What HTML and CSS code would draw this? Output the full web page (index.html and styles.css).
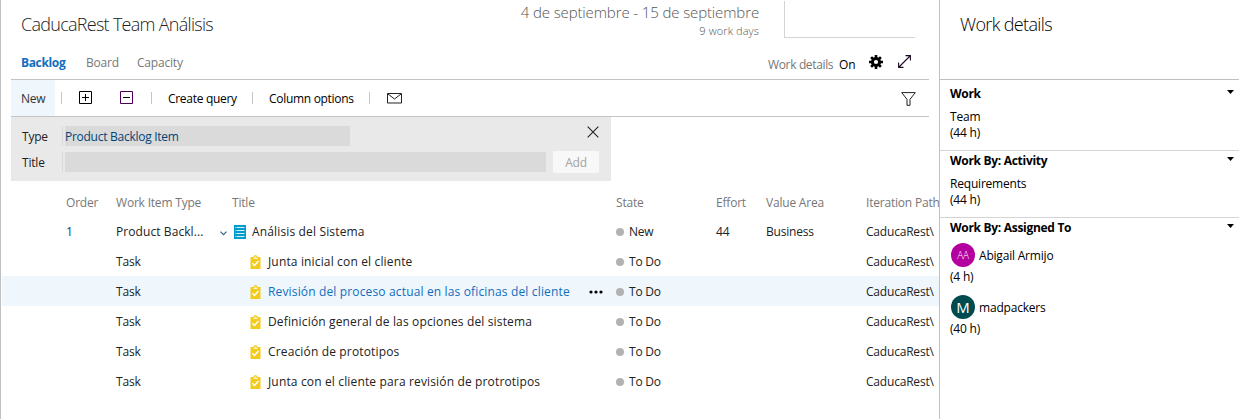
FILE: index.html
```html
<!DOCTYPE html>
<html lang="es">
<head>
<meta charset="utf-8">
<title>CaducaRest Team Análisis</title>
<link rel="stylesheet" href="styles.css">
</head>
<body>
<svg class="defs" width="0" height="0">
  <symbol id="task" viewBox="0 0 10 14">
    <path d="M0 2h3V1h1V0h2v1h1v1h3v12H0z" fill="#f2cb1d"/>
    <path d="M3 3.300h4M4.200 2h1.600" stroke="#fff" stroke-width="1"/>
    <path d="M2 8.200l2 2.200 4-4.400" fill="none" stroke="#fff" stroke-width="1.500"/>
  </symbol>
  <symbol id="caret" viewBox="0 0 7 4"><path d="M0 0h7L3.500 4z" fill="#000"/></symbol>
</svg>
<div class="app">
  <main class="main">
    <header class="head">
      <h1 class="title">CaducaRest Team Análisis</h1>
      <div class="sprint">
        <div class="dates">4 de septiembre - 15 de septiembre</div>
        <div class="days">9 work days</div>
      </div>
      <div class="chart"></div>
    </header>
    <nav class="tabs">
      <b class="tab-on">Backlog</b><span class="tab-board">Board</span><span>Capacity</span>
      <div class="tools">
        <span class="wd">Work details</span><span class="on">On</span>
        <svg class="gear" width="14" height="14" viewBox="-7 -7 14 14"><circle r="3.600" fill="none" stroke="#000" stroke-width="3"/><path d="M0-7V-4M0 7V4M-7 0H-4M7 0H4M-4.900-4.900L-3-3M4.900 4.900L3 3M-4.900 4.900L-3 3M4.900-4.900L3-3" stroke="#000" stroke-width="2.600"/></svg>
        <svg class="expand" width="13" height="13" viewBox="0 0 13 13" fill="none" stroke="#1a0a22" stroke-width="1.100"><path d="M1 12L12 1M7.500.6h4.900v4.900M.6 7.500v4.900h4.900"/></svg>
      </div>
    </nav>
    <div class="toolbar">
      <span class="new">New</span><i class="sep s1"></i>
      <svg class="plus" width="13" height="13" viewBox="0 0 13 13" fill="none" stroke="#000"><path d="M.5.5h12v12H.5zM3 6.500h7M6.500 3v7"/></svg>
      <svg class="minus" width="13" height="13" viewBox="0 0 13 13" fill="none"><path d="M.5.5h12v12H.5z" stroke="#4b0055"/><path d="M3 6.500h7" stroke="#000"/></svg>
      <i class="sep s2"></i><span class="cq">Create query</span><i class="sep s3"></i><span class="co">Column options</span><i class="sep s4"></i>
      <svg class="mail" width="15" height="11" viewBox="0 0 15 11" fill="none" stroke="#222"><path d="M.5.5h14v9.500H.5zM1 1l6.500 5L14 1"/></svg>
      <svg class="filter" width="15" height="14" viewBox="0 0 15 14" fill="none" stroke="#222"><path d="M.7.6h13.600L9 7.300v6H6v-6z"/></svg>
    </div>
    <section class="form">
      <div class="line"><label>Type</label><div class="input type"><span>Product Backlog Item</span></div>
        <svg class="close" width="12" height="12" viewBox="0 0 12 12" stroke="#222" stroke-width="1.100"><path d="M.7.7l10.600 10.600M11.300.7L.7 11.300"/></svg></div>
      <div class="line"><label>Title</label><div class="input name"><span></span></div><div class="add">Add</div></div>
    </section>
    <section class="grid">
      <div class="row hd"><span></span><span>Order</span><span>Work Item Type</span><span>Title</span><span></span><span>State</span><span>Effort</span><span>Value Area</span><span>Iteration Path</span></div>
      <div class="row"><span></span><span class="ord">1</span><span class="pb">Product Backl...</span>
        <span class="parent"><svg class="chev" width="7" height="5" viewBox="0 0 7 5" fill="none" stroke="#3c6285" stroke-width="1.200"><path d="M.5.7l3 3 3-3"/></svg><svg width="12" height="14" viewBox="0 0 12 14"><path d="M0 0h12v14H0z" fill="#009ccc"/><path d="M1.500 2.500h1M1.500 5.500h1M1.500 8.500h1M1.500 11.500h1M3 2.500h7.500M3 5.500h7.500M3 8.500h7.500M3 11.500h7.500" stroke="#fff" stroke-opacity=".85"/></svg><em>Análisis del Sistema</em></span>
        <span></span><span class="st"><i></i>New</span><span>44</span><span>Business</span><span>CaducaRest\</span></div>
      <div class="row"><span></span><span></span><span>Task</span><span class="child"><svg width="11" height="14"><use href="#task"/></svg><em>Junta inicial con el cliente</em></span><span></span><span class="st"><i></i>To Do</span><span></span><span></span><span>CaducaRest\</span></div>
      <div class="row sel"><span></span><span></span><span>Task</span><span class="child"><svg width="11" height="14"><use href="#task"/></svg><em>Revisión del proceso actual en las oficinas del cliente</em></span><span class="more"><svg width="14" height="4" viewBox="0 0 14 4"><circle cx="2" cy="2" r="1.600"/><circle cx="7" cy="2" r="1.600"/><circle cx="12" cy="2" r="1.600"/></svg></span><span class="st"><i></i>To Do</span><span></span><span></span><span>CaducaRest\</span></div>
      <div class="row"><span></span><span></span><span>Task</span><span class="child"><svg width="11" height="14"><use href="#task"/></svg><em>Definición general de las opciones del sistema</em></span><span></span><span class="st"><i></i>To Do</span><span></span><span></span><span>CaducaRest\</span></div>
      <div class="row"><span></span><span></span><span>Task</span><span class="child"><svg width="11" height="14"><use href="#task"/></svg><em>Creación de prototipos</em></span><span></span><span class="st"><i></i>To Do</span><span></span><span></span><span>CaducaRest\</span></div>
      <div class="row"><span></span><span></span><span>Task</span><span class="child"><svg width="11" height="14"><use href="#task"/></svg><em>Junta con el cliente para revisión de protrotipos</em></span><span></span><span class="st"><i></i>To Do</span><span></span><span></span><span>CaducaRest\</span></div>
    </section>
  </main>
  <aside class="side">
    <h2 class="side-title">Work details</h2>
    <section class="group work"><h3>Work<svg width="7" height="4"><use href="#caret"/></svg></h3><p>Team</p><p>(44 h)</p></section>
    <section class="group"><h3>Work By: Activity<svg width="7" height="4"><use href="#caret"/></svg></h3><p>Requirements</p><p>(44 h)</p></section>
    <section class="group last"><h3>Work By: Assigned To<svg width="7" height="4"><use href="#caret"/></svg></h3>
      <div class="person"><span class="av aa">AA</span><span class="who">Abigail Armijo</span></div><p>(4 h)</p>
      <div class="person second"><span class="av mm">M</span><span class="who">madpackers</span></div><p>(40 h)</p></section>
  </aside>
</div>
</body>
</html>
```
FILE: styles.css
```css
* { box-sizing: border-box; }
body { margin: 0; width: 1239px; height: 419px; overflow: hidden; background: #fff; color: #222; font: 12px/16px "Open Sans", "Noto Sans", sans-serif; letter-spacing: -0.2px; white-space: nowrap; }
h1, h2, h3, p { margin: 0; font-weight: 400; }
em { font-style: normal; letter-spacing: 0.15px; }
svg { display: block; flex: none; }
.defs { position: absolute; }
.app { display: flex; height: 419px; }
.main { width: 939px; border-left: 1px solid #c0c0c0; }
.side { width: 300px; border-left: 1px solid #c0c0c0; color: #000; }
.head { display: flex; height: 50px; padding-left: 20px; }
.title { width: 300px; padding-top: 12px; font-size: 18px; line-height: 24px; font-weight: 300; letter-spacing: -0.72px; color: #222; }
.sprint { width: 438px; text-align: right; color: #555; }
.dates { padding-top: 2px; font-size: 15px; line-height: 20px; font-weight: 300; letter-spacing: -0.12px; }
.days { padding-top: 1px; font-size: 11px; font-weight: 300; letter-spacing: 0.1px; }
.chart { width: 131px; height: 37px; margin: 1px 0 0 25px; border: solid #d4d4d4; border-width: 0 0 1px 1px; }
.tabs { display: flex; height: 29px; padding: 5px 0 0 20px; color: #777; }
.tab-on { width: 65px; color: #106ebe; letter-spacing: -0.35px; }
.tab-board { width: 51px; }
.tools { display: flex; margin-left: auto; padding-right: 27px; }
.wd { width: 72px; padding-top: 2px; letter-spacing: -0.35px; }
.wd, .on { margin-left: -1px; }
.on { width: 30px; padding-top: 2px; color: #000; }
.tools .gear { margin: 0 15px 0 0; }
.tools .expand { margin-right: 1px; }
.toolbar { display: flex; align-items: center; height: 38px; width: 918px; margin-left: 10px; border: solid #c4c4c4; border-width: 1px 0; color: #000; letter-spacing: -0.3px; }
.new { width: 44px; height: 36px; padding: 11px 0 0 10px; background: #eff6fc; color: #333; letter-spacing: -0.2px; }
.sep { width: 1px; height: 12px; background: #c4c4c4; }
.s1 { margin-left: 6px; }
.plus { margin: -2px 28px 0 17px; }
.minus { margin: -2px 18px 0 0; }
.cq { width: 100px; padding: 2px 0 0 16px; }
.co { width: 116px; padding: 2px 0 0 16px; }
.mail { margin-left: 17px; }
.filter { margin: 2px 13px 0 auto; }
.form { display: flex; flex-direction: column; gap: 4px; width: 600px; height: 64px; margin-left: 10px; padding: 8px 11px; background: #e9e9e9; }
.line { display: flex; align-items: center; height: 22px; }
.line label { width: 40px; padding-top: 2px; }
.input { height: 20px; padding: 3px 0 0 2px; border-left: 1px solid #dadada; background: #dadada; box-shadow: inset 2px 0 #e9e9e9; }
.type { width: 288px; color: #004578; letter-spacing: -0.27px; }
.name { width: 484px; }
.close { margin: -8px 1px 0 auto; }
.add { width: 46px; height: 22px; margin-left: 7px; padding-top: 4px; text-align: center; background: #f8f8f8; color: #a3a3a3; }
.row { display: grid; grid-template-columns: 64px 50px 116px 358px 26px 100px 50px 100px 72px; align-items: center; height: 30px; margin-left: 1px; padding-top: 2px; }
.hd { height: 35px; padding-top: 9px; color: #777; }
.sel { background: #eff6fc; }
.sel em { color: #106ebe; }
.ord { color: #004578; }
.pb { letter-spacing: 0.08px; }
.more { padding-top: 0; margin-left: -1px; }
.parent, .child, .st, .person { display: flex; align-items: center; }
.parent svg { margin-right: 6px; }
.parent .chev { margin: 2px 7px 0 -12px; }
.child { padding-left: 18px; }
.child svg { margin-right: 7px; }
.st i { width: 8px; height: 8px; margin: -1px 5px 0 0; border-radius: 50%; background: #b2b2b2; }
.side-title { height: 80px; padding: 12px 0 0 20px; border-bottom: 1px solid #c0c0c0; font-size: 18px; line-height: 24px; font-weight: 300; letter-spacing: -0.65px; }
.group { height: 67px; padding: 2px 5px 0 10px; border-bottom: 1px solid #d4d4d4; }
.work { height: 71px; padding-top: 6px; }
.last { border: 0; }
.group h3 { display: flex; justify-content: space-between; margin-bottom: 7px; font-size: 12px; font-weight: 700; letter-spacing: -0.3px; }
.group h3 svg { margin-top: 4px; }
.person { height: 24px; }
.last p { margin-top: 2px; }
.last .second { margin-top: 10px; }
.who { padding-top: 2px; }
.av { width: 24px; height: 24px; margin: 0 4px 0 1px; border-radius: 50%; color: #fff; line-height: 24px; text-align: center; }
.aa { background: #b4009e; font-size: 10px; font-weight: 300; }
.mm { background: #004b50; font-size: 15px; }
```
